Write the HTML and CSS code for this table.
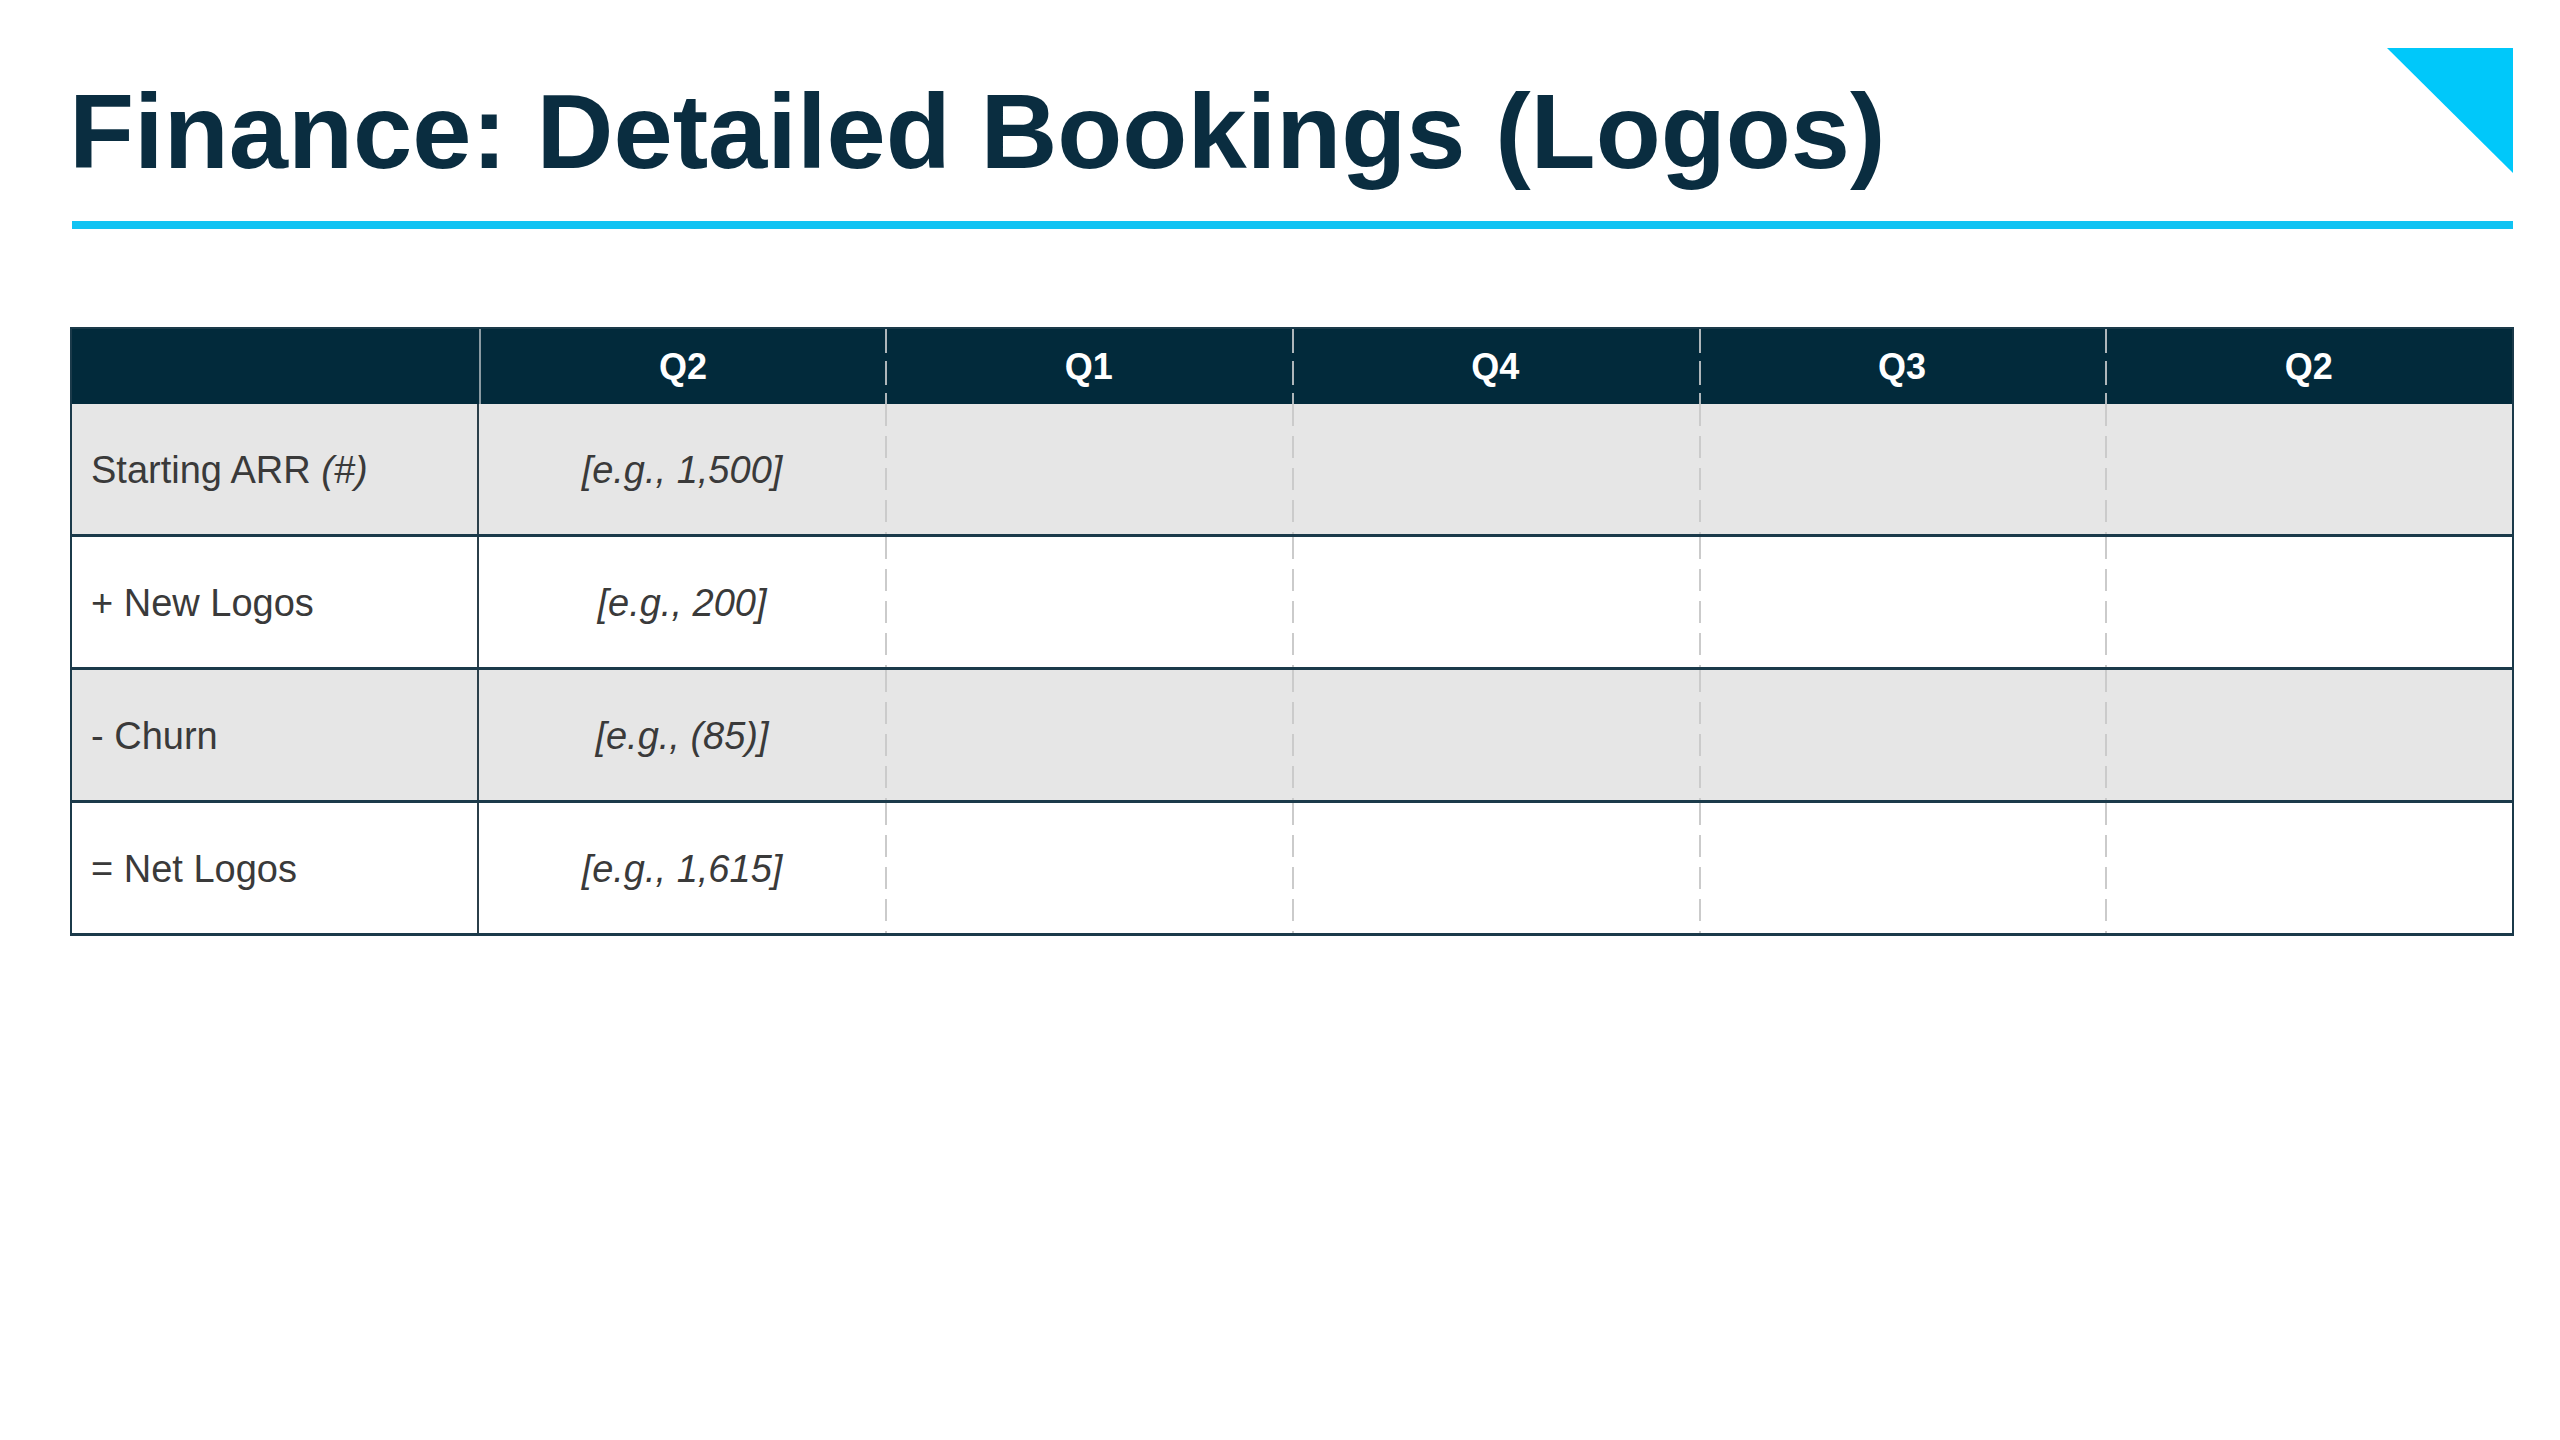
FILE: index.html
```html
<!DOCTYPE html>
<html lang="en">
<head>
<meta charset="utf-8">
<title>Finance: Detailed Bookings (Logos)</title>
<link rel="stylesheet" href="styles.css">
</head>
<body>
<div class="slide">
  <header class="head">
    <h1 class="title">Finance: Detailed Bookings (Logos)</h1>
    <svg class="corner" width="126" height="125" viewBox="0 0 126 125" aria-hidden="true"><polygon points="0,0 126,0 126,125" fill="#00c8fa"/></svg>
  </header>
  <div class="rule"></div>
  <div class="table">
    <div class="row hdr">
      <div class="cell"></div>
      <div class="cell c2">Q2</div>
      <div class="cell dash">Q1</div>
      <div class="cell dash">Q4</div>
      <div class="cell dash">Q3</div>
      <div class="cell dash">Q2</div>
    </div>
    <div class="row gray">
      <div class="cell label">Starting ARR&nbsp;<i>(#)</i></div>
      <div class="cell val"><i>[e.g., 1,500]</i></div>
      <div class="cell dash"></div><div class="cell dash"></div><div class="cell dash"></div><div class="cell dash"></div>
    </div>
    <div class="row">
      <div class="cell label">+ New Logos</div>
      <div class="cell val"><i>[e.g., 200]</i></div>
      <div class="cell dash"></div><div class="cell dash"></div><div class="cell dash"></div><div class="cell dash"></div>
    </div>
    <div class="row gray">
      <div class="cell label">- Churn</div>
      <div class="cell val"><i>[e.g., (85)]</i></div>
      <div class="cell dash"></div><div class="cell dash"></div><div class="cell dash"></div><div class="cell dash"></div>
    </div>
    <div class="row last">
      <div class="cell label">= Net Logos</div>
      <div class="cell val"><i>[e.g., 1,615]</i></div>
      <div class="cell dash"></div><div class="cell dash"></div><div class="cell dash"></div><div class="cell dash"></div>
    </div>
  </div>
</div>
</body>
</html>
```
FILE: styles.css
```css
html, body {
  margin: 0;
  padding: 0;
  background: #ffffff;
}
body {
  width: 2560px;
  height: 1440px;
  font-family: "Liberation Sans", Arial, sans-serif;
}
.slide {
  padding: 0 46px 0 70px;
}
.head {
  display: flex;
  justify-content: space-between;
  align-items: flex-start;
  padding-right: 1px;
}
.title {
  margin: 79px 0 0 -1px;
  font-size: 106.5px;
  line-height: 1;
  font-weight: 700;
  color: #0a2d40;
  letter-spacing: 0;
}
.corner {
  display: block;
  margin-top: 48px;
}
.rule {
  margin: 35px 0 0 2px;
  height: 8px;
  background: #10c3f3;
  width: 2441px;
}
.table {
  margin-top: 98px;
  width: 2444px;
  box-sizing: border-box;
  border: 2px solid #1b3a4a;
  border-bottom-width: 3px;
}
.row {
  display: grid;
  grid-template-columns: repeat(6, 1fr);
  height: 130px;
  border-bottom: 3px solid #1b3a4a;
  background: #ffffff;
}
.row.gray {
  background: #e6e6e6;
}
.row.last {
  border-bottom: 0;
}
.row.hdr {
  height: 75px;
  border-bottom: 0;
  background: #022a3b;
}
.cell {
  display: flex;
  align-items: center;
  justify-content: center;
  box-sizing: border-box;
  font-size: 38px;
  color: #3a3a3a;
  padding-top: 3px;
}
.hdr .cell {
  color: #ffffff;
  font-weight: 700;
  font-size: 36px;
  padding-top: 2px;
}
.dash {
  background-image: repeating-linear-gradient(to bottom, #cbcbcb 0 22px, transparent 22px 32px);
  background-size: 2px 100%;
  background-repeat: no-repeat;
  background-position: left top;
}
.hdr .dash {
  background-image: repeating-linear-gradient(to bottom, #aeb6ba 0 24px, transparent 24px 32px);
}
.hdr .c2 {
  border-left: 2px solid #8a9aa2;
}
.label {
  justify-content: flex-start;
  padding-left: 19px;
  border-right: 2px solid #2b3f4a;
}
.val i, .label i {
  font-style: italic;
}
```
